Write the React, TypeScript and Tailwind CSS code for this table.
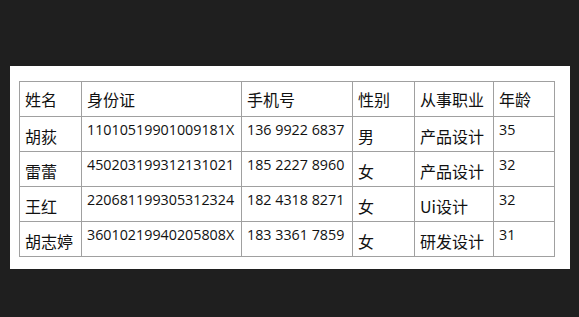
import React from 'react';

interface Person {
    name: string;
    idCard: string;
    phone: string;
    gender: string;
    job: string;
    age: string;
}

const people: Person[] = [
    { name: '胡荻', idCard: '11010519901009181X', phone: '136 9922 6837', gender: '男', job: '产品设计', age: '35' },
    { name: '雷蕾', idCard: '450203199312131021', phone: '185 2227 8960', gender: '女', job: '产品设计', age: '32' },
    { name: '王红', idCard: '220681199305312324', phone: '182 4318 8271', gender: '女', job: 'Ui设计', age: '32' },
    { name: '胡志婷', idCard: '36010219940205808X', phone: '183 3361 7859', gender: '女', job: '研发设计', age: '31' },
];

const headers = ['姓名', '身份证', '手机号', '性别', '从事职业', '年龄'];
const widths = ['w-[62px]', 'w-[160px]', 'w-[111px]', 'w-[62px]', 'w-[79px]', 'w-[61px]'];

const cjk = "font-['Noto_Sans_CJK_SC',sans-serif] text-[16px] leading-[24px]";
const num = "font-['Open_Sans',sans-serif] text-[14.3px] leading-[20px] font-medium";

const cell = 'border border-[#a0a0a0] align-top px-[5px] h-[35px] text-[#111]';

export default function App() {
    return (
        <div className="w-[579px] h-[317px] bg-[#1f1f1f] pt-[66px] pl-[10px] overflow-hidden">
            <div className="w-[560px] h-[203px] bg-white pt-[15px] pl-[9px]">
                <table className="table-fixed border-collapse w-[535px]">
                    <colgroup>
                        {widths.map((w, i) => (
                            <col key={i} className={w} />
                        ))}
                    </colgroup>
                    <thead>
                        <tr>
                            {headers.map((h) => (
                                <th key={h} className={`${cell} ${cjk} font-normal text-left pt-[5px]`}>
                                    {h}
                                </th>
                            ))}
                        </tr>
                    </thead>
                    <tbody>
                        {people.map((p) => (
                            <tr key={p.idCard}>
                                <td className={`${cell} ${cjk} pt-[7px]`}>{p.name}</td>
                                <td className={`${cell} ${num} pt-[3px]`}>{p.idCard}</td>
                                <td className={`${cell} ${num} pt-[3px]`}>{p.phone}</td>
                                <td className={`${cell} ${cjk} pt-[7px]`}>{p.gender}</td>
                                <td className={`${cell} ${cjk} pt-[7px]`}>{p.job}</td>
                                <td className={`${cell} ${num} pt-[3px]`}>{p.age}</td>
                            </tr>
                        ))}
                    </tbody>
                </table>
            </div>
        </div>
    );
}
